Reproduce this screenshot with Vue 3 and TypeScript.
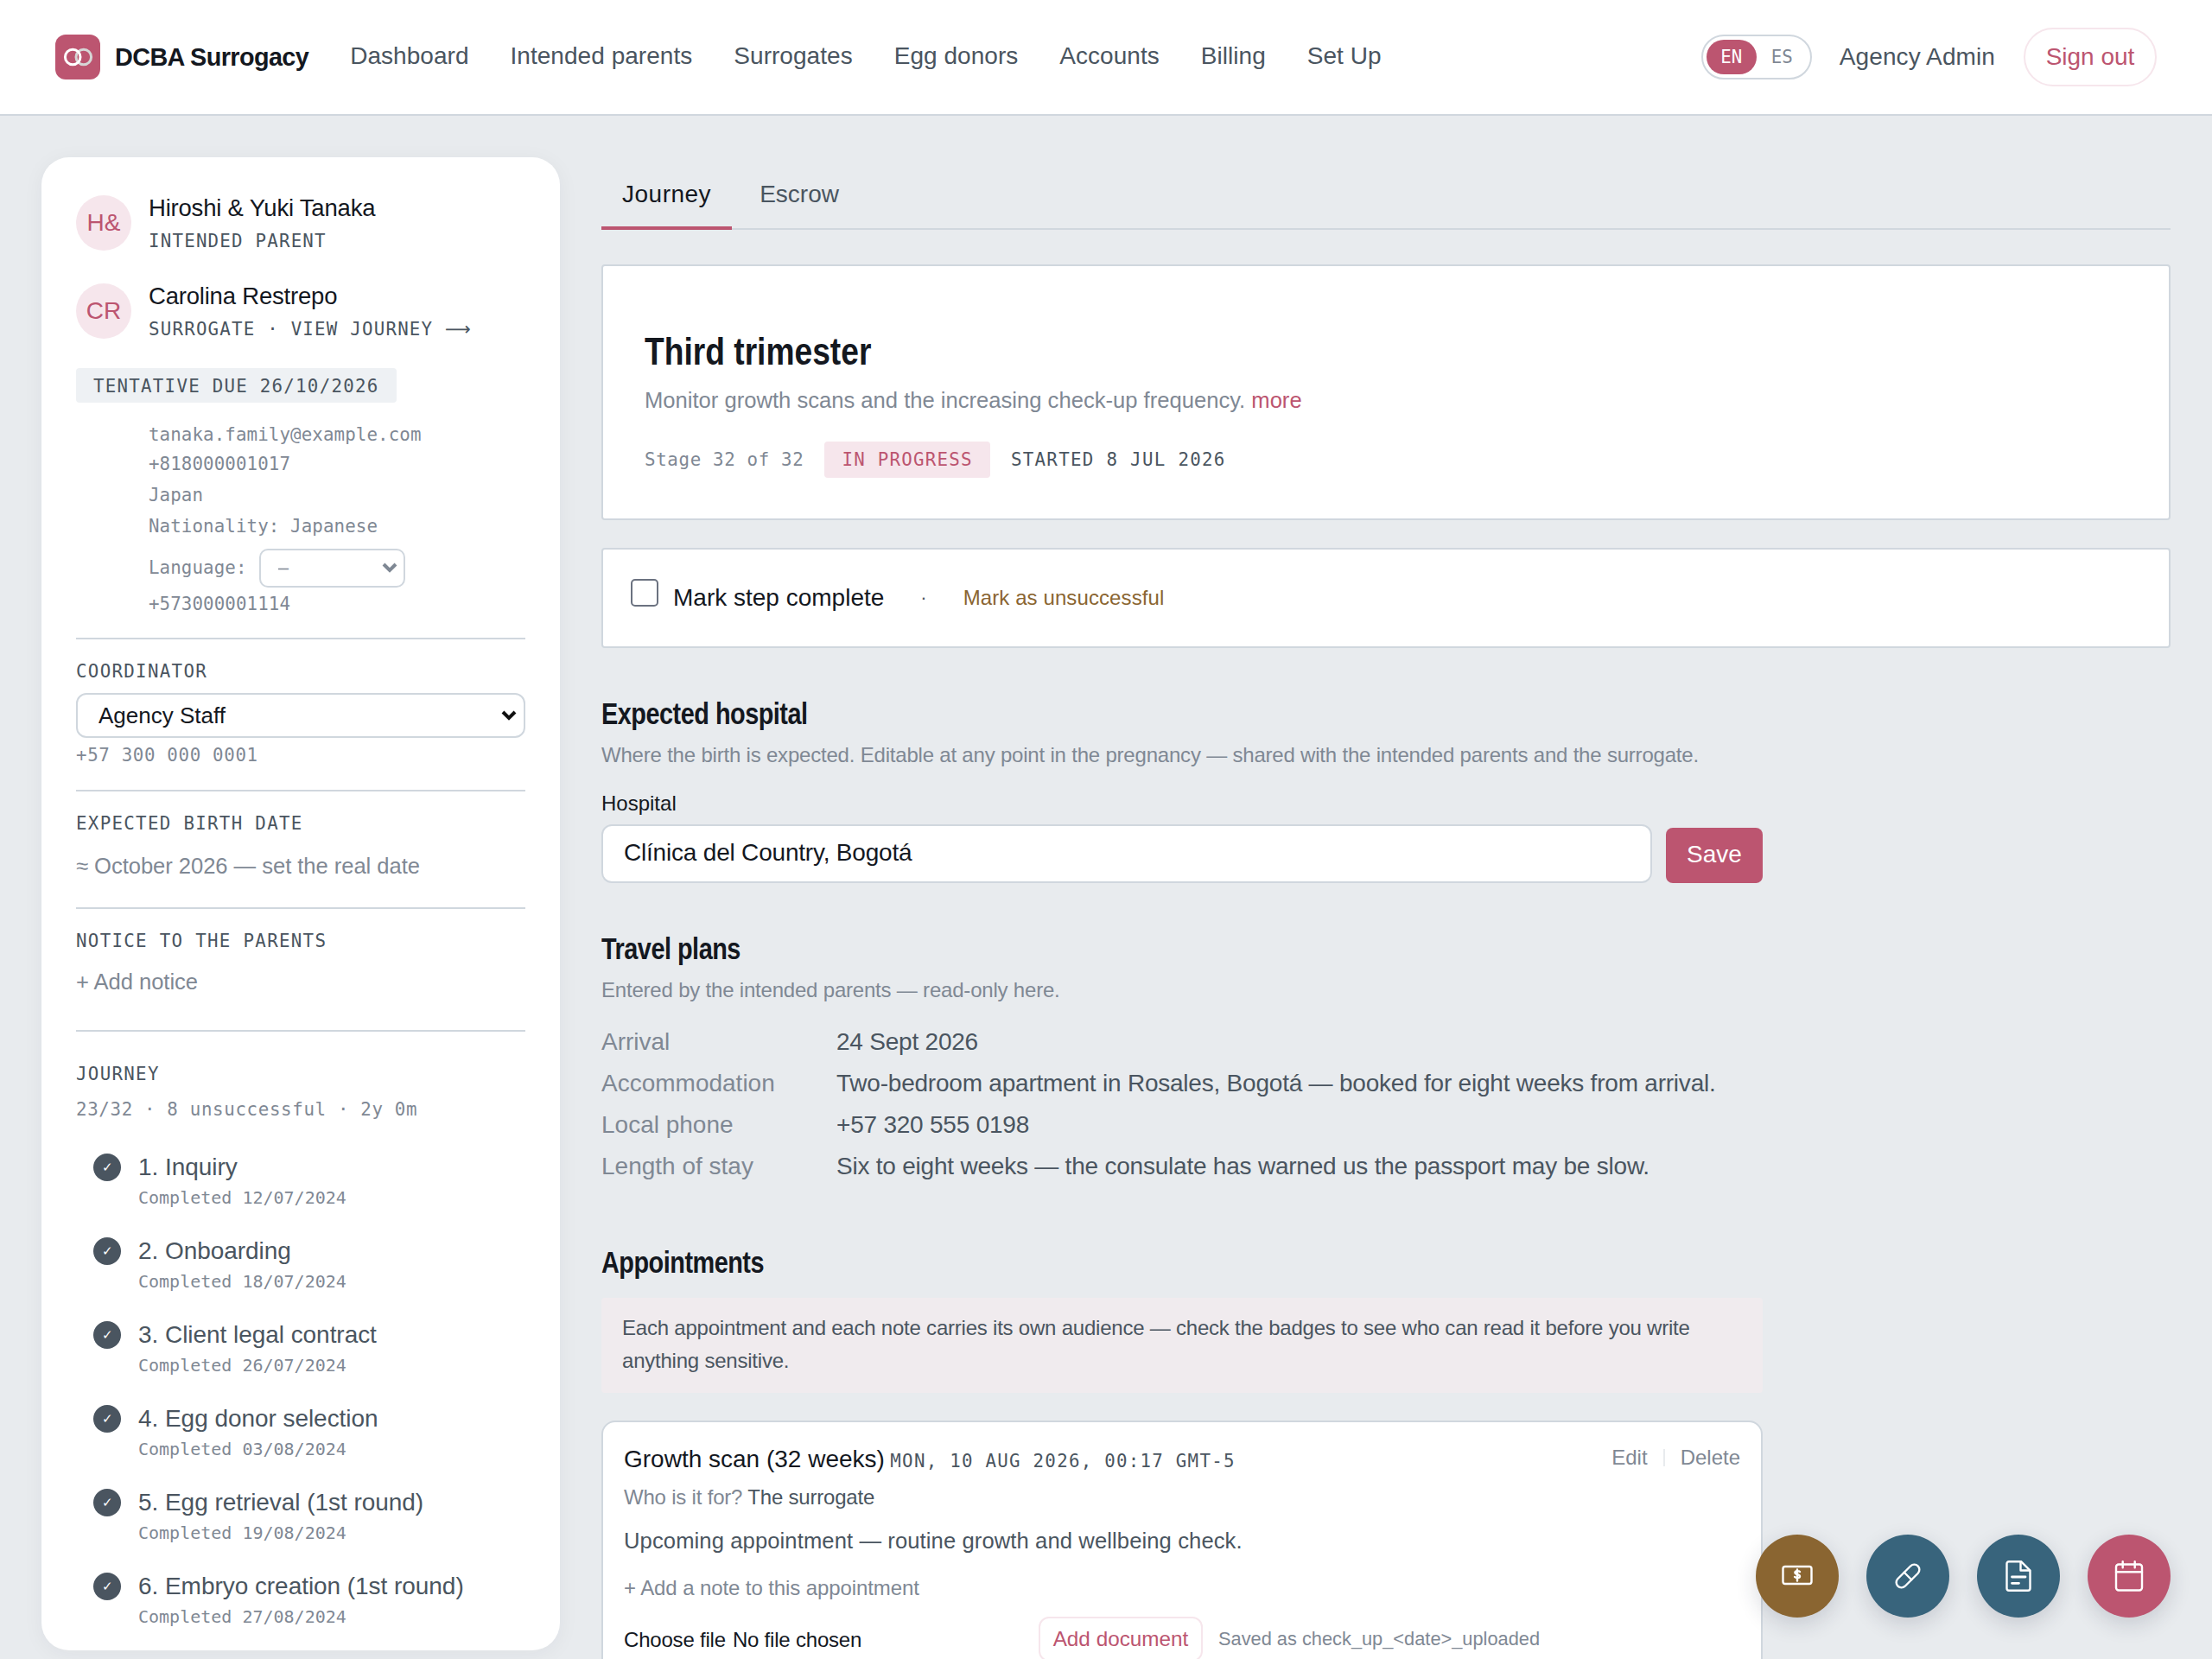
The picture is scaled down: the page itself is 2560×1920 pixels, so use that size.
<script setup lang="ts">
const nav: string[] = ['Dashboard', 'Intended parents', 'Surrogates', 'Egg donors', 'Accounts', 'Billing', 'Set Up']
const steps = [
  { name: '1. Inquiry', date: 'Completed 12/07/2024' },
  { name: '2. Onboarding', date: 'Completed 18/07/2024' },
  { name: '3. Client legal contract', date: 'Completed 26/07/2024' },
  { name: '4. Egg donor selection', date: 'Completed 03/08/2024' },
  { name: '5. Egg retrieval (1st round)', date: 'Completed 19/08/2024' },
  { name: '6. Embryo creation (1st round)', date: 'Completed 27/08/2024' },
]
const travel = [
  ['Arrival', '24 Sept 2026'],
  ['Accommodation', 'Two-bedroom apartment in Rosales, Bogotá — booked for eight weeks from arrival.'],
  ['Local phone', '+57 320 555 0198'],
  ['Length of stay', 'Six to eight weeks — the consulate has warned us the passport may be slow.'],
]
</script>

<template>
  <div class="app">
    <header class="top">
      <div class="brand">
        <svg class="logo" viewBox="0 0 52 52" width="52" height="52">
          <rect width="52" height="52" rx="12" fill="#bc5570" />
          <circle cx="32.800" cy="26" r="8.800" fill="none" stroke="#d6d6d6" stroke-width="3" />
          <circle cx="20.200" cy="26" r="8.800" fill="none" stroke="#fff" stroke-width="3" />
        </svg>
        <span class="brand-name">DCBA Surrogacy</span>
      </div>
      <nav class="nav">
        <a v-for="n in nav" :key="n">{{ n }}</a>
      </nav>
      <div class="top-right">
        <div class="lang"><span class="on">EN</span><span class="off">ES</span></div>
        <span class="who">Agency Admin</span>
        <button class="signout">Sign out</button>
      </div>
    </header>

    <div class="body">
      <aside class="side">
        <div class="person">
          <div class="avatar">H&amp;</div>
          <div class="ptext">
            <div class="pname">Hiroshi &amp; Yuki Tanaka</div>
            <div class="prole">INTENDED PARENT</div>
          </div>
        </div>
        <div class="person second">
          <div class="avatar">CR</div>
          <div class="ptext">
            <div class="pname">Carolina Restrepo</div>
            <div class="prole">SURROGATE · VIEW JOURNEY <span class="arrow">⟶</span></div>
          </div>
        </div>
        <div class="due">TENTATIVE DUE 26/10/2026</div>
        <div class="contact">
          <div class="c1">tanaka.family@example.com</div>
          <div class="c2">+818000001017</div>
          <div class="c3">Japan</div>
          <div class="c4">Nationality: Japanese</div>
          <div class="c5">
            <span>Language:</span>
            <select class="mini"><option>—</option></select>
          </div>
          <div class="c6">+573000001114</div>
        </div>
        <section class="sec coord">
          <div class="sec-title">COORDINATOR</div>
          <select class="full"><option>Agency Staff</option></select>
          <div class="phone">+57 300 000 0001</div>
        </section>
        <section class="sec birth">
          <div class="sec-title">EXPECTED BIRTH DATE</div>
          <div class="muted-line">≈ October 2026 — set the real date</div>
        </section>
        <section class="sec notice">
          <div class="sec-title">NOTICE TO THE PARENTS</div>
          <div class="muted-line">+ Add notice</div>
        </section>
        <section class="sec journey">
          <div class="sec-title">JOURNEY</div>
          <div class="phone jstat">23/32 · 8 unsuccessful · 2y 0m</div>
          <ul class="steps">
            <li v-for="s in steps" :key="s.name">
              <span class="tick">✓</span>
              <div>
                <div class="sname">{{ s.name }}</div>
                <div class="sdate">{{ s.date }}</div>
              </div>
            </li>
          </ul>
        </section>
      </aside>

      <main class="main">
        <div class="tabs">
          <a class="tab active">Journey</a>
          <a class="tab">Escrow</a>
        </div>

        <div class="card stage">
          <h1>Third trimester</h1>
          <p class="sub">Monitor growth scans and the increasing check-up frequency. <a class="more">more</a></p>
          <div class="meta">
            <span class="m1">Stage 32 of 32</span>
            <span class="pill">IN PROGRESS</span>
            <span class="m2">STARTED 8 JUL 2026</span>
          </div>
        </div>

        <div class="card actions">
          <span class="box"></span>
          <span class="mark">Mark step complete</span>
          <span class="dot">·</span>
          <a class="unsuccess">Mark as unsuccessful</a>
        </div>

        <div class="narrow">
          <h2 class="h-hospital">Expected hospital</h2>
          <p class="desc">Where the birth is expected. Editable at any point in the pregnancy — shared with the intended parents and the surrogate.</p>
          <label class="lbl">Hospital</label>
          <div class="hrow">
            <input class="hinput" value="Clínica del Country, Bogotá" />
            <button class="save">Save</button>
          </div>

          <h2 class="h-travel">Travel plans</h2>
          <p class="desc">Entered by the intended parents — read-only here.</p>
          <dl class="tgrid">
            <template v-for="t in travel" :key="t[0]">
              <dt>{{ t[0] }}</dt>
              <dd>{{ t[1] }}</dd>
            </template>
          </dl>

          <h2 class="h-appt">Appointments</h2>
          <div class="warn">Each appointment and each note carries its own audience — check the badges to see who can read it before you write anything sensitive.</div>

          <article class="appt">
            <div class="appt-head">
              <div><span class="atitle">Growth scan (32 weeks)</span> <span class="adate">MON, 10 AUG 2026, 00:17 GMT-5</span></div>
              <div class="aact"><a>Edit</a><i></i><a>Delete</a></div>
            </div>
            <div class="afor">Who is it for? <span>The surrogate</span></div>
            <p class="atext">Upcoming appointment — routine growth and wellbeing check.</p>
            <div class="anote">+ Add a note to this appointment</div>
            <div class="afile">
              <label class="file"><span>Choose file</span><span>No file chosen</span></label>
              <button class="adddoc">Add document</button>
              <span class="saved">Saved as check_up_&lt;date&gt;_uploaded</span>
            </div>
          </article>
        </div>
      </main>
    </div>

    <div class="fabs">
      <button class="fab brown">
        <svg viewBox="0 0 36 36" width="36" height="36" fill="none" stroke="#fff" stroke-width="2.400" stroke-linejoin="round" stroke-linecap="round">
          <rect x="1.500" y="7" width="33" height="20" rx="2.500" />
          <path d="M21 13c-1-1.200-5.600-1.400-5.600 1 0 2.800 5.600 1.400 5.600 4.200 0 2.400-4.700 2.200-5.900.8M18 10.500v13" />
        </svg>
      </button>
      <button class="fab teal">
        <svg viewBox="0 0 36 36" width="36" height="36" fill="none" stroke="#fff" stroke-width="2.400" stroke-linejoin="round" stroke-linecap="round">
          <path d="M21.260 6.260a6 6 0 0 1 8.480 8.480L14.740 29.740a6 6 0 0 1-8.480-8.480Z" />
          <path d="M13.760 13.760l8.480 8.480" />
        </svg>
      </button>
      <button class="fab teal">
        <svg viewBox="0 0 36 36" width="36" height="36" fill="none" stroke="#fff" stroke-width="2.400" stroke-linejoin="round" stroke-linecap="round">
          <path d="M4.500 3.700a2.500 2.500 0 0 1 2.500-2.500h14l10.500 10.500v20.600a2.500 2.500 0 0 1-2.500 2.500H7a2.500 2.500 0 0 1-2.500-2.500Z" />
          <path d="M20.500 1.500v10h10.500" />
          <path d="M10.500 19h15.500M10.500 26.300h8" stroke-width="2.800" />
        </svg>
      </button>
      <button class="fab rose">
        <svg viewBox="0 0 36 36" width="36" height="36" fill="none" stroke="#fff" stroke-width="2.400" stroke-linejoin="round" stroke-linecap="round">
          <rect x="3" y="4.500" width="30" height="30" rx="3" />
          <path d="M3 13.300h30M10.700 1.200v7M24.700 1.200v7" />
        </svg>
      </button>
    </div>
  </div>
</template>

<style>
html, body { margin: 0; background: #e8ebee; overflow: hidden; }
</style>

<style scoped>
.app {
  --sans: "Liberation Sans", Arial, sans-serif;
  --mono: "DejaVu Sans Mono", "Liberation Mono", monospace;
  --rose: #bc5570;
  --blush: #f6e6ec;
  --ink: #14181f;
  --slate: #4a5560;
  --mute: #7f8894;
  --line: #d0d7de;
  width: 2560px;
  height: 1920px;
  overflow: hidden;
  background: #e8ebee;
  font-family: var(--sans);
  color: var(--ink);
}
a { text-decoration: none; }
h1, h2, p, ul, dl, dd { margin: 0; padding: 0; }
button { font-family: var(--sans); cursor: pointer; }

.top {
  height: 134px;
  box-sizing: border-box;
  background: #fff;
  border-bottom: 2px solid var(--line);
  display: flex;
  align-items: center;
  padding: 0 64px;
}
.brand { display: flex; align-items: center; gap: 17px; }
.logo { display: block; }
.brand-name { font-size: 28.800px; font-weight: 700; letter-spacing: -.6px; }
.nav { display: flex; gap: 48px; margin-left: 48px; padding-bottom: 2px; }
.nav a { font-size: 28px; color: var(--slate); letter-spacing: .04px; }
.top-right { margin-left: auto; display: flex; align-items: center; }
.lang {
  display: flex; align-items: center; height: 52px; box-sizing: border-box;
  border: 2px solid var(--line); border-radius: 26px; padding: 0 20px 0 4px;
  font-family: var(--mono); font-size: 20.800px;
}
.lang .on { background: var(--rose); color: #fff; width: 58px; height: 40px; line-height: 40px; text-align: center; border-radius: 20px; }
.lang .off { color: var(--mute); margin-left: 17px; }
.who { font-size: 28px; color: var(--slate); margin-left: 32px; letter-spacing: .1px; }
.signout {
  margin-left: 33px; height: 68px; width: 154px; background: #fff;
  border: 2px solid var(--blush); border-radius: 34px; color: var(--rose); font-size: 28px; padding: 0;
}

.body { display: flex; gap: 48px; padding: 48px 48px 0; align-items: flex-start; }
.side {
  width: 600px; height: 1728px; box-sizing: border-box; flex: none; overflow: hidden;
  background: #fff; border-radius: 32px; padding: 44px 40px 0;
  box-shadow: 0 4px 24px rgba(30, 40, 60, .05);
}
.person { display: flex; gap: 20px; align-items: center; height: 64px; }
.person.second { margin-top: 38px; }
.ptext { padding-top: 4px; }
.avatar {
  width: 64px; height: 64px; border-radius: 50%; background: var(--blush); color: var(--rose);
  font-size: 28px; display: flex; align-items: center; justify-content: center; flex: none;
}
.pname { font-size: 27.500px; line-height: 34px; letter-spacing: -.2px; color: var(--ink); }
.prole { font-family: var(--mono); font-size: 20.800px; letter-spacing: 1.200px; line-height: 34px; color: var(--slate); margin-top: 4px; }
.arrow { font-family: "DejaVu Sans", sans-serif; }
.due {
  width: fit-content; margin-top: 34px; height: 40px; line-height: 42px; padding: 0 20px;
  background: #eef1f4; border-radius: 4px; font-family: var(--mono); font-size: 20.800px;
  letter-spacing: 1.250px; color: var(--slate);
}
.contact { padding: 19px 0 0 84px; font-family: var(--mono); font-size: 20.800px; letter-spacing: .1px; color: var(--mute); }
.contact > div { height: 36px; line-height: 36px; }
.contact .c2 { margin-top: -2px; }
.contact .c5 { height: 46px; margin-top: 7px; display: flex; align-items: center; gap: 14px; line-height: 46px; }
.contact .c6 { margin-top: 1px; }
.mini {
  width: 169px; height: 45px; border: 2px solid var(--line); border-radius: 10px;
  color: var(--mute); font-family: var(--mono); font-size: 20.800px; padding: 0 0 0 20px;
  appearance: none;
  background: #fff url("data:image/svg+xml,%3Csvg xmlns='http://www.w3.org/2000/svg' width='20' height='12'%3E%3Cpath d='M3 2l7 7 7-7' fill='none' stroke='%237f8894' stroke-width='4'/%3E%3C/svg%3E") no-repeat right 6px center;
}
.sec { border-top: 2px solid var(--line); box-sizing: border-box; }
.coord { margin-top: 21px; padding-top: 24px; height: 176px; }
.birth { padding-top: 24px; height: 136px; }
.notice { padding-top: 24px; height: 142px; }
.notice .muted-line { margin-top: 18px; }
.journey { padding-top: 36px; }
.sec-title { font-family: var(--mono); font-size: 20.800px; letter-spacing: 1.300px; color: var(--slate); line-height: 26px; }
.full {
  display: block; width: 100%; height: 52px; margin-top: 12px; border: 2px solid var(--line);
  border-radius: 12px; font-family: var(--sans); font-size: 26px; color: var(--ink); padding: 0 0 0 24px;
  appearance: none;
  background: #fff url("data:image/svg+xml,%3Csvg xmlns='http://www.w3.org/2000/svg' width='20' height='12'%3E%3Cpath d='M3 2l7 7 7-7' fill='none' stroke='%23111' stroke-width='4'/%3E%3C/svg%3E") no-repeat right 7px center;
}
.phone { font-family: var(--mono); font-size: 20.800px; letter-spacing: .65px; color: var(--mute); margin-top: 7px; line-height: 26px; }
.muted-line { font-size: 25.600px; letter-spacing: -.05px; color: var(--mute); margin-top: 20px; line-height: 32px; }
.jstat { margin-top: 15px; }
.steps { list-style: none; margin-top: 37px; padding-left: 20px; }
.steps li { display: flex; gap: 20px; height: 97px; align-items: flex-start; }
.tick {
  width: 32px; height: 32px; border-radius: 50%; background: var(--slate); color: #fff;
  font-size: 15px; display: flex; align-items: center; justify-content: center; flex: none; margin-top: 1px;
}
.sname { font-size: 28px; line-height: 34px; letter-spacing: -.05px; color: var(--slate); }
.sdate { font-family: var(--mono); font-size: 20px; line-height: 26px; color: var(--mute); margin-top: 5px; }

.main { flex: 1; min-width: 0; }
.tabs { display: flex; gap: 8px; border-bottom: 2px solid var(--line); height: 82px; }
.tab { display: block; box-sizing: border-box; font-size: 28px; padding: 25px 24px 0; color: var(--slate); height: 84px; line-height: 36px; }
.tab.active { color: var(--ink); border-bottom: 4px solid var(--rose); letter-spacing: .5px; }
.card { background: #fff; border: 2px solid var(--line); border-radius: 4px; }
.stage { margin-top: 40px; padding: 68px 48px 0; height: 296px; box-sizing: border-box; }
h1, h2 { transform-origin: left center; font-weight: 700; }
h1 { font-size: 44.800px; line-height: 60px; transform: scaleX(.83); }
.sub { font-size: 25.600px; color: var(--mute); line-height: 36px; margin-top: 9px; }
.more { color: var(--rose); }
.meta { display: flex; align-items: center; margin-top: 30px; font-family: var(--mono); font-size: 20.800px; }
.m1 { color: var(--mute); letter-spacing: .65px; }
.pill { margin-left: 24px; height: 42px; line-height: 42px; padding: 0 20px; background: var(--blush); color: var(--rose); border-radius: 4px; letter-spacing: 1.250px; }
.m2 { margin-left: 24px; color: var(--slate); letter-spacing: 1.300px; }
.actions { margin-top: 32px; height: 116px; box-sizing: border-box; display: flex; align-items: center; padding-left: 32px; }
.box { width: 32px; height: 32px; box-sizing: border-box; border: 2px solid #6b7280; border-radius: 5px; margin-top: -12px; }
.mark { margin-left: 17px; font-size: 28px; font-weight: 500; }
.dot { margin-left: 42px; color: var(--slate); font-size: 22px; }
.unsuccess { margin-left: 42px; color: #8a6531; font-size: 24px; letter-spacing: .1px; }
.narrow { width: 1344px; }
h2 { font-size: 35.200px; line-height: 44px; letter-spacing: -.6px; transform: scaleX(.82); }
.h-hospital { margin-top: 54px; }
.desc { font-size: 24px; line-height: 32px; letter-spacing: -.2px; color: var(--mute); margin-top: 10px; }
.lbl { display: block; font-size: 24px; line-height: 30px; margin-top: 25px; }
.hrow { display: flex; gap: 16px; align-items: flex-end; margin-top: 9px; }
.hinput {
  flex: 1; min-width: 0; height: 68px; box-sizing: border-box; border: 2px solid var(--line); border-radius: 12px; background: #fff;
  padding: 0 24px 2px; font-family: var(--sans); font-size: 28px; letter-spacing: -.2px; color: var(--ink); outline: none;
}
.save { width: 112px; height: 64px; border: none; border-radius: 8px; background: var(--rose); color: #fff; font-size: 28px; padding: 0 0 2px; }
.h-travel { margin-top: 54px; }
.tgrid { display: grid; grid-template-columns: 272px 1fr; grid-auto-rows: 48px; margin-top: 20px; font-size: 28px; line-height: 48px; }
.tgrid dt { color: var(--mute); }
.tgrid dd { color: var(--slate); letter-spacing: -.22px; }
.h-appt { margin-top: 65px; }
.warn { margin-top: 19px; background: #f0ebee; padding: 16px 24px; height: 110px; box-sizing: border-box; font-size: 24px; letter-spacing: -.22px; line-height: 38px; color: var(--slate); border-radius: 4px; }
.appt { margin-top: 32px; background: #fff; border: 2px solid var(--line); border-radius: 16px; padding: 27px 24px 30px; height: 400px; box-sizing: border-box; }
.appt-head { display: flex; justify-content: space-between; align-items: flex-start; }
.atitle { font-size: 28px; font-weight: 500; }
.adate { font-family: var(--mono); font-size: 20.800px; letter-spacing: 1.250px; color: var(--slate); margin-left: 2px; }
.aact { display: flex; align-items: center; font-size: 24px; color: var(--mute); }
.aact i { width: 2px; height: 20px; background: #e8ebee; margin: 0 18px; }
.afor { font-size: 24px; letter-spacing: -.2px; color: var(--mute); margin-top: 12px; line-height: 32px; }
.afor span { color: var(--slate); }
.atext { font-size: 25.600px; letter-spacing: .1px; color: var(--slate); margin-top: 17px; line-height: 34px; }
.anote { font-size: 24px; letter-spacing: -.1px; color: var(--mute); margin-top: 22px; line-height: 32px; }
.afile { display: flex; align-items: flex-start; margin-top: 17px; }
.file { width: 480px; flex: none; display: flex; gap: 8px; font-size: 24px; letter-spacing: -.2px; color: var(--ink); margin-top: 11px; line-height: 32px; }
.adddoc { height: 52px; width: 190px; padding: 0; background: #fff; border: 2px solid var(--blush); border-radius: 12px; color: var(--rose); font-size: 24.300px; }
.saved { margin-left: 18px; font-size: 21.800px; color: var(--mute); margin-top: 10px; line-height: 32px; }

.fabs { position: fixed; right: 48px; bottom: 48px; display: flex; gap: 32px; }
.fab { width: 96px; height: 96px; border: none; border-radius: 50%; display: flex; align-items: center; justify-content: center; padding: 0; box-shadow: 0 8px 24px rgba(30, 40, 60, .16); }
.brown { background: #8a6531; }
.teal { background: #38647c; }
.rose { background: var(--rose); }
</style>
